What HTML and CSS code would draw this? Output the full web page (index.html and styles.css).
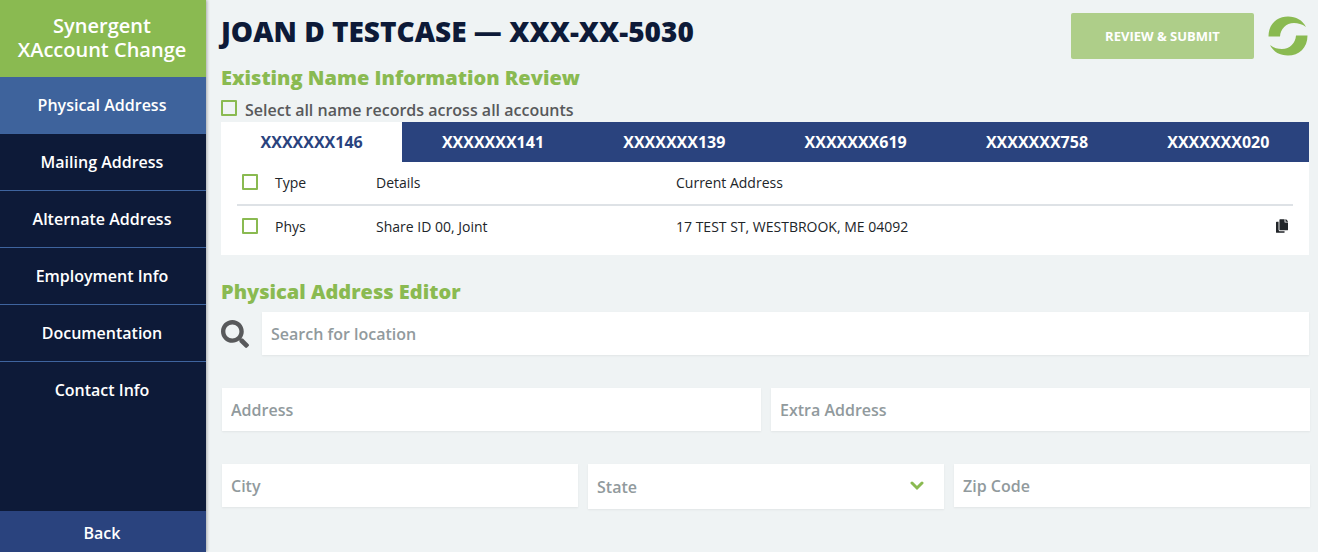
FILE: index.html
```
<!DOCTYPE html>
<html lang="en">
<head>
  <meta charset="UTF-8" />
  <meta name="viewport" content="width=device-width, initial-scale=1.0"/>
  <title>Synergent XAccount Change</title>
  <link rel="stylesheet" href="styles.css">
</head>
<body>
  <div class="app">

    <!-- SIDEBAR -->
    <nav class="sidebar">
      <div class="brand">Synergent XAccount Change</div>
      <a class="nav-link active" href="#">Physical Address</a>
      <a class="nav-link" href="#">Mailing Address</a>
      <a class="nav-link" href="#">Alternate Address</a>
      <a class="nav-link" href="#">Employment Info</a>
      <a class="nav-link" href="#">Documentation</a>
      <a class="nav-link" href="#">Contact Info</a>
      <a class="back-link" href="#">Back</a>
    </nav>

    <main class="main">

      <!-- HEADER -->
      <header class="header">
        <h1>JOAN D TESTCASE — XXX-XX-5030</h1>
        <button class="submit" type="button">REVIEW &amp; SUBMIT</button>
        <svg class="logo" viewBox="0 0 40 40" aria-hidden="true">
          <path d="M0.5 20.500 C0.500 8 9 0.500 20 0.500 C28 0.500 34.500 4 38 11 C34 8 30 7 26 7 C18 7 12.500 13 12 20.500 Z" />
          <path d="M39.500 19.500 C39.500 32 31 39.500 20 39.500 C12 39.500 5.500 36 2 29 C6 32 10 33 14 33 C22 33 27.500 27 28 19.500 Z" />
        </svg>
      </header>

      <!-- NAME RECORDS -->
      <section class="review">
        <h2>Existing Name Information Review</h2>
        <label class="select-all">
          <input class="check" type="checkbox">
          Select all name records across all accounts
        </label>

        <div class="tabs" role="tablist">
          <button class="tab active" type="button" role="tab" aria-selected="true">XXXXXXX146</button>
          <button class="tab" type="button" role="tab">XXXXXXX141</button>
          <button class="tab" type="button" role="tab">XXXXXXX139</button>
          <button class="tab" type="button" role="tab">XXXXXXX619</button>
          <button class="tab" type="button" role="tab">XXXXXXX758</button>
          <button class="tab" type="button" role="tab">XXXXXXX020</button>
        </div>

        <div class="panel">
          <table class="records">
            <thead>
              <tr>
                <th class="col-check"><input class="check" type="checkbox" aria-label="Select all records"></th>
                <th class="col-type">Type</th>
                <th class="col-details">Details</th>
                <th>Current Address</th>
                <th class="col-copy"></th>
              </tr>
            </thead>
            <tbody>
              <tr>
                <td><input class="check" type="checkbox" aria-label="Select record"></td>
                <td>Phys</td>
                <td>Share ID 00, Joint</td>
                <td>17 TEST ST, WESTBROOK, ME 04092</td>
                <td class="col-copy">
                  <button class="copy" type="button" aria-label="Copy address">
                    <svg viewBox="0 0 448 512" aria-hidden="true">
                      <path d="M320 448v40c0 13.300-10.700 24-24 24H24c-13.300 0-24-10.700-24-24V120c0-13.300 10.700-24 24-24h72v296c0 30.900 25.100 56 56 56h168zm0-344V0H152c-13.300 0-24 10.700-24 24v368c0 13.300 10.700 24 24 24h272c13.300 0 24-10.700 24-24V128H344c-13.200 0-24-10.800-24-24zm121-31L375 7A24 24 0 0 0 358 0H352v96h96v-6.100a24 24 0 0 0-7-17z" />
                    </svg>
                  </button>
                </td>
              </tr>
            </tbody>
          </table>
        </div>
      </section>

      <!-- ADDRESS EDITOR -->
      <form class="editor">
        <h2>Physical Address Editor</h2>
        <div class="search">
          <svg class="search-icon" viewBox="0 0 512 512" aria-hidden="true">
            <path d="M505 442.700L405.300 343c-4.500-4.500-10.600-7-17-7H372c27.600-35.300 44-79.700 44-128C416 93.100 322.900 0 208 0S0 93.100 0 208s93.100 208 208 208c48.300 0 92.700-16.400 128-44v16.300c0 6.400 2.500 12.500 7 17l99.700 99.700c9.400 9.400 24.600 9.400 33.900 0l28.300-28.300c9.400-9.400 9.400-24.600.1-34zM208 336c-70.700 0-128-57.200-128-128 0-70.700 57.200-128 128-128 70.700 0 128 57.200 128 128 0 70.700-57.200 128-128 128z" />
          </svg>
          <input class="field" type="text" placeholder="Search for location" aria-label="Search for location">
        </div>
        <div class="row two">
          <input class="field" type="text" placeholder="Address" aria-label="Address">
          <input class="field" type="text" placeholder="Extra Address" aria-label="Extra Address">
        </div>
        <div class="row three">
          <input class="field" type="text" placeholder="City" aria-label="City">
          <div class="select-wrap">
            <select class="field" aria-label="State">
              <option>State</option>
            </select>
            <svg class="chevron" viewBox="0 0 14 10" aria-hidden="true">
              <path d="M2 2 L7 7 L12 2" />
            </svg>
          </div>
          <input class="field" type="text" placeholder="Zip Code" aria-label="Zip Code">
        </div>
      </form>
    </main>
  </div>
</body>
</html>
```
FILE: styles.css
```
* {
  margin: 0;
  padding: 0;
  box-sizing: border-box;
}

body {
  font-family: "Open Sans", sans-serif;
  font-size: 16px;
  font-weight: 600;
  background: #eff3f4;
  color: #0d1a38;
}

button,
input,
select {
  font: inherit;
  border: none;
}

.app {
  display: flex;
  min-height: 100vh;
}

/* Sidebar */
.sidebar {
  width: 206px;
  flex-shrink: 0;
  display: flex;
  flex-direction: column;
  background: #0d1a38;
  box-shadow: 1px 0 3px rgba(0, 0, 0, 0.3);
  text-align: center;
}

.sidebar a {
  padding-right: 2px;
  color: white;
  text-decoration: none;
}

.brand {
  padding: 14px 12px 15px 10px;
  background: #8aba51;
  color: white;
  font-size: 20px;
  line-height: 24px;
}

.nav-link {
  line-height: 56px;
  border-bottom: 1px solid #3e649e;
}

.nav-link.active {
  background: #3e639c;
}

.nav-link:nth-last-child(2) {
  border-bottom: none;
}

.back-link {
  margin-top: auto;
  padding-top: 4px;
  background: #2a437e;
  line-height: 37px;
}

/* Main column */
.main {
  flex: 1;
  min-width: 0;
  padding: 13px 9px 20px 15px;
}

.header {
  display: flex;
  align-items: flex-start;
  margin-bottom: 5px;
}

h1 {
  flex: 1;
  font-size: 28px;
  font-weight: 800;
  line-height: 36px;
}

h2 {
  margin-bottom: 6px;
  color: #8aba51;
  font-size: 20px;
  font-weight: 800;
  line-height: 28px;
}

.submit {
  width: 183px;
  height: 46px;
  border-radius: 2px;
  background: #aece89;
  color: white;
  font-size: 13px;
  font-weight: 700;
}

.logo {
  width: 40px;
  height: 40px;
  margin: 3px 1px 0 14px;
  fill: #8aba51;
}

/* Name records */
.select-all {
  display: flex;
  gap: 8px;
  color: #58595b;
  line-height: 24px;
}

.check {
  appearance: none;
  display: block;
  width: 16px;
  height: 16px;
  border: 2px solid #8aba51;
  border-radius: 1px;
}

.select-all .check {
  margin-top: 2px;
}

.check:checked {
  background: #8aba51;
}

.tabs {
  display: flex;
  background: #2a437e;
}

.tab {
  flex: 1;
  height: 40px;
  background: transparent;
  color: white;
  font-weight: 700;
}

.tab.active {
  background: white;
  color: #2a437e;
}

.panel {
  padding: 0 16px 7px;
  background: white;
}

.records {
  width: 100%;
  table-layout: fixed;
  border-collapse: collapse;
  color: #212529;
  font-size: 14px;
  font-weight: 400;
  text-align: left;
}

.records th,
.records td {
  height: 43px;
  padding-bottom: 2px;
  font-weight: 400;
}

.records th {
  border-bottom: 2px solid #dee2e6;
}

.records .check {
  margin-left: 5px;
}

.col-check {
  width: 38px;
}

.col-type {
  width: 101px;
}

.col-details {
  width: 300px;
}

.col-copy {
  width: 40px;
  padding-right: 5px;
  text-align: right;
}

.copy {
  display: block;
  width: 12px;
  height: 14px;
  margin-left: auto;
  background: none;
}

.copy svg {
  display: block;
  width: 12px;
  height: 14px;
  fill: #212529;
}

/* Address editor */
.editor {
  margin-top: 23px;
}

.search {
  display: flex;
  align-items: center;
  gap: 13px;
}

.search-icon {
  width: 28px;
  height: 28px;
  flex-shrink: 0;
  fill: #58595b;
}

.field {
  display: block;
  width: 100%;
  min-width: 0;
  height: 43px;
  padding: 0 9px;
  border-radius: 0;
  background: white;
  box-shadow: 0 1px 2px rgba(0, 0, 0, 0.06);
  color: #919a9d;
}

.field::placeholder {
  color: #919a9d;
  opacity: 1;
}

.row {
  display: grid;
  align-items: start;
  gap: 10px;
  margin: 33px -1px 0 1px;
}

.row.two {
  grid-template-columns: repeat(2, 1fr);
}

.row.three {
  grid-template-columns: repeat(3, 1fr);
}

.select-wrap {
  position: relative;
}

select.field {
  appearance: none;
  height: 45px;
}

.chevron {
  position: absolute;
  top: 17px;
  right: 20px;
  width: 14px;
  height: 10px;
  fill: none;
  stroke: #8aba51;
  stroke-width: 3;
  stroke-linecap: round;
  pointer-events: none;
}
```
